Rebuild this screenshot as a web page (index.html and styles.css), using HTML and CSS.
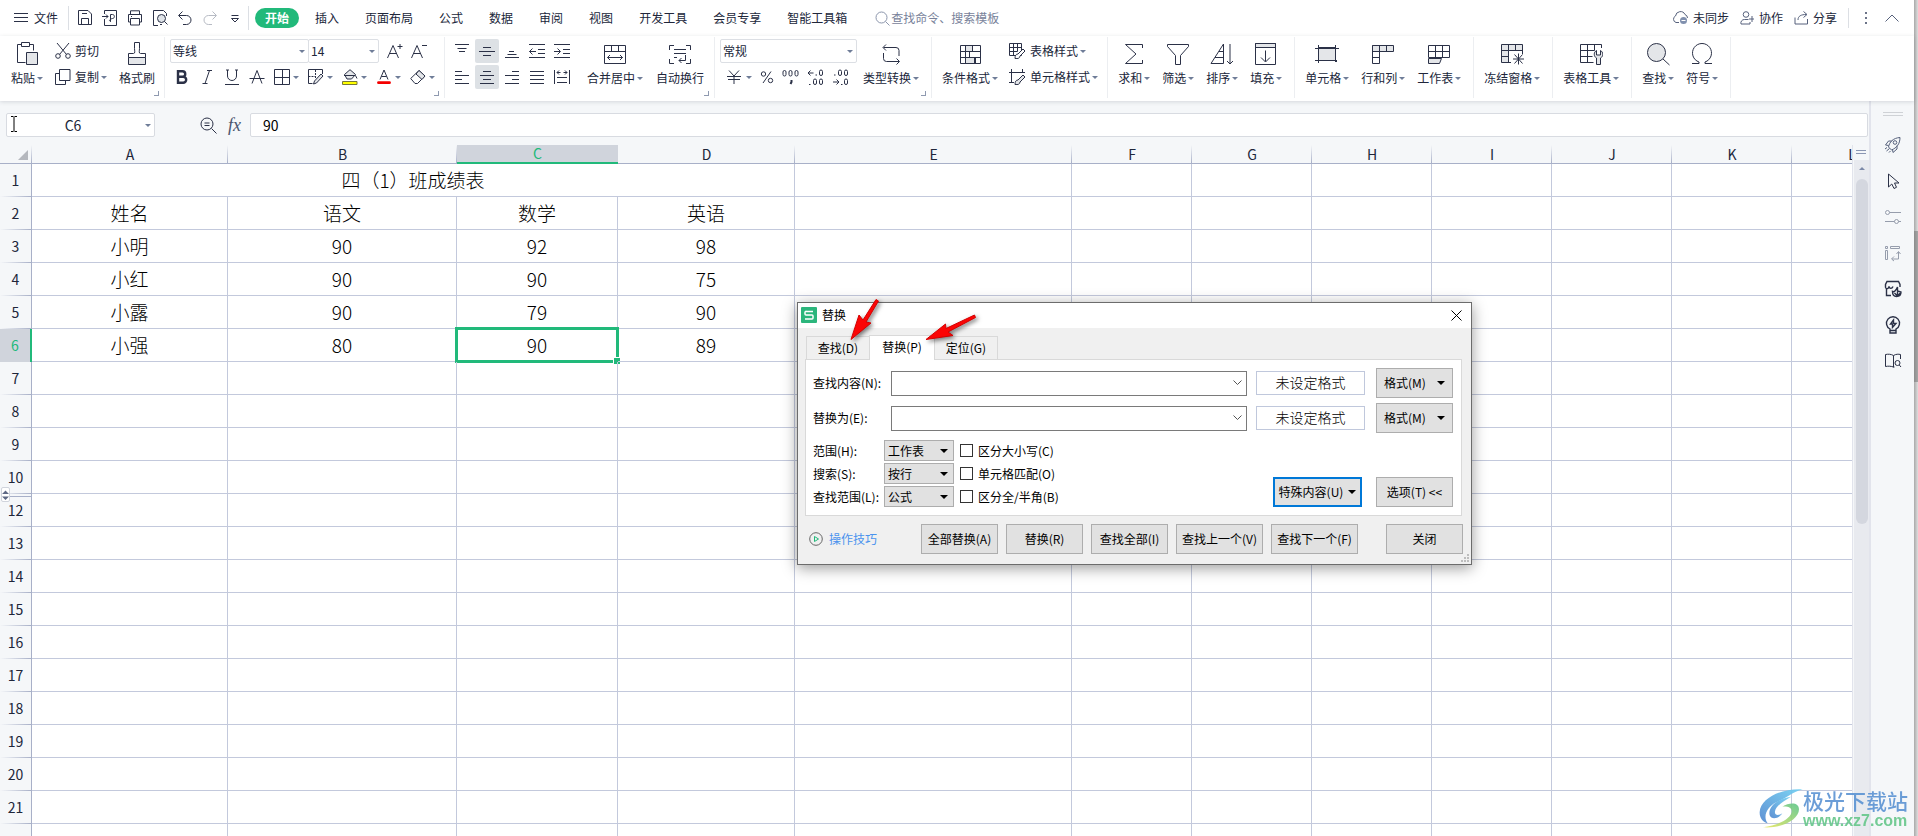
FILE: index.html
```html
<!DOCTYPE html>
<html lang="zh-CN">
<head>
<meta charset="utf-8">
<title>表格</title>
<link rel="stylesheet" href="styles.css">
</head>
<body>
<div class="app">
  <header class="menubar">
    <button class="file"><svg width="14" height="12" viewBox="0 0 14 12"><path d="M0 1.500h14M0 5.500h14M0 9.500h14"/></svg>文件</button>
    <span class="rule"></span>
    <div class="quick">
      <button aria-label="保存"><svg width="16" height="16" viewBox="0 0 16 16"><path d="M1.500.5h9.500l3.500 3.500v10.500h-13zM4.500 14.500v-6h7v6M5 3.500h5"/></svg></button>
      <button aria-label="输出为PDF"><svg width="16" height="16" viewBox="0 0 16 16"><path d="M2.500 4V.5h12v15h-12V9M0 6.500h6M4 4.500l2 2-2 2M8.500 11V4.500h2c2.500 0 2.500 4 0 4-3 .5-4 3-1.500 3"/></svg></button>
      <button aria-label="打印"><svg width="16" height="16" viewBox="0 0 16 16"><path d="M3.500 4V.8h9V4M3.500 12H1.500V4.500h13V12h-2M3.500 8.500h9v6.500h-9zM4 6.500h1"/></svg></button>
      <button aria-label="打印预览"><svg width="16" height="16" viewBox="0 0 16 16"><path d="M6 15.500H1.500V.5h10l3 3V6M10 14.500h-2"/><circle cx="9.500" cy="8.500" r="4" fill="#dfe3e8"/><path d="M12.500 11.500l3 3"/></svg></button>
      <button aria-label="撤销"><svg width="16" height="16" viewBox="0 0 16 16"><path d="M5.500 1.500l-4 4 4 4M2 5.500h7.500a4.500 4.500 0 0 1 0 9H6"/></svg></button>
      <button aria-label="恢复" class="off"><svg width="16" height="16" viewBox="0 0 16 16"><path d="M10.500 1.500l4 4-4 4M14 5.500H6.500a4.500 4.500 0 0 0 0 9H10"/></svg></button>
      <button aria-label="更多"><svg width="16" height="16" viewBox="0 0 16 16"><path d="M4.500 5.500h7M4.500 8.500h7L8 12z"/></svg></button>
    </div>
    <span class="rule"></span>
    <nav class="tabs">
      <button class="on">开始</button><button>插入</button><button>页面布局</button><button>公式</button><button>数据</button><button>审阅</button><button>视图</button><button>开发工具</button><button>会员专享</button><button>智能工具箱</button>
    </nav>
    <label class="search"><svg width="15" height="15" viewBox="0 0 15 15"><circle cx="6.500" cy="6.500" r="5.500"/><path d="M10.500 10.500l4 4"/></svg><input type="text" placeholder="查找命令、搜索模板" aria-label="查找命令"></label>
    <div class="account">
      <button><svg width="17" height="16" viewBox="0 0 17 16"><path d="M7 12.500H4A3.500 3.500 0 0 1 3.500 6a5 5 0 0 1 9.500-1.500 3.800 3.800 0 0 1 2.500 3.500"/><circle cx="11.500" cy="10.500" r="3.500" fill="#8090ae" stroke="none"/><path d="M9.500 10.500h4" stroke="#fff"/></svg>未同步</button>
      <button><svg width="15" height="14" viewBox="0 0 15 14"><circle cx="6" cy="3.500" r="2.800"/><path d="M8.500 8.500h-4a3.500 3.500 0 0 0-3.500 4.500h9v-2M12 5v6M9 8h5"/></svg>协作</button>
      <button><svg width="15" height="14" viewBox="0 0 15 14"><path d="M1 6.500v6.500h12.500V8M4 9c0-4 3-5.500 8.500-5.500M9.500.5l3.500 3-3.500 3"/></svg>分享</button>
      <span class="rule"></span>
      <button aria-label="选项"><svg width="4" height="14" viewBox="0 0 4 14"><path d="M1 1h2v2H1zM1 6h2v2H1zM1 11h2v2H1z" fill="#6b7388" stroke="none"/></svg></button>
      <button aria-label="收起功能区" class="fold"><svg width="14" height="10" viewBox="0 0 14 10"><path d="M.5 8.500L7 2l6.500 6.500"/></svg></button>
    </div>
  </header>

  <div class="ribbon">
    <section class="group clip">
      <button class="big"><svg width="24" height="24" viewBox="0 0 24 24"><path d="M6.500 2.500h-4v18h8M14.500 2.500h4v6M6.500.5h8v4h-8z"/><path d="M11.500 10.500h11v12h-11z" fill="#e4e6e9"/></svg><span>粘贴<i class="caret"></i></span></button>
      <div class="stack">
        <button class="small"><svg width="16" height="16" viewBox="0 0 16 16"><path d="M2 0l9.500 11.500M14 0L4.500 11.500"/><circle cx="3" cy="13" r="2.300"/><circle cx="13" cy="13" r="2.300"/></svg><span>剪切</span></button>
        <button class="small"><svg width="16" height="16" viewBox="0 0 16 16"><path d="M4.500 4.500h-4v11h10v-4M4.500.5h10.500v11H4.500z"/></svg><span>复制<i class="caret"></i></span></button>
      </div>
      <button class="big"><svg width="24" height="24" viewBox="0 0 24 24"><path d="M3.500 15.500h17v7h-17z" fill="#e4e6e9"/><path d="M3.500 15.500v-4h5c2 0 1-3 1-5v-6h5v6c0 2-1 5 1 5h5v4"/></svg><span>格式刷</span></button>
      <i class="launch"></i>
    </section>

    <section class="group font">
      <div class="stack">
        <div class="row">
          <span class="pick face"><select aria-label="字体"><option>等线</option></select><i class="caret"></i></span>
          <span class="pick size"><select aria-label="字号"><option>14</option></select><i class="caret"></i></span>
          <button class="tool" aria-label="增大字号"><svg width="16" height="16" viewBox="0 0 16 16"><path d="M.5 15L6 2.500 11.500 15M2.500 10.500h7M10.500 3.500h5M13 1v5"/></svg></button>
          <button class="tool" aria-label="减小字号"><svg width="16" height="16" viewBox="0 0 16 16"><path d="M.5 15L6 2.500 11.500 15M2.500 10.500h7M11 2.500h5"/></svg></button>
        </div>
        <div class="row marks">
          <button aria-label="加粗"><svg width="16" height="16" viewBox="0 0 16 16"><path d="M4 2.200h4.500a2.700 2.700 0 0 1 0 5.500H4zM4 7.700h5.200a3 3 0 0 1 0 6H4z" stroke-width="2.400"/></svg></button>
          <button aria-label="倾斜"><svg width="16" height="16" viewBox="0 0 16 16"><path d="M8 1.500h5M3.500 14.500h5M10.500 1.500l-4.500 13"/></svg></button>
          <button aria-label="下划线"><svg width="16" height="16" viewBox="0 0 16 16"><path d="M3.500 1v6a4.500 4.500 0 0 0 9 0V1M1 15.500h14M2 1h3M11 1h3"/></svg></button>
          <button aria-label="删除线"><svg width="16" height="16" viewBox="0 0 16 16"><path d="M3 14.500L8 1.500l5 13M.5 9.500h15"/></svg></button>
          <button aria-label="边框"><svg width="16" height="16" viewBox="0 0 16 16"><path d="M.5.5h15v15H.5zM.5 8.500h15M8.500.5v15"/></svg><i class="caret"></i></button>
          <button aria-label="绘图边框"><svg width="16" height="16" viewBox="0 0 16 16"><path d="M14.500 5V.5H.5v14h4"/><path d="M.5 7.500h7M7.500 1v8" stroke-dasharray="2 1"/><path d="M5.500 15l1-3L13 5l2 2-6.500 7z" fill="#e4e6e9"/></svg><i class="caret"></i></button>
          <button aria-label="填充颜色"><svg width="16" height="16" viewBox="0 0 16 16"><path d="M2.500 5.500L8 .7l5.500 4.800L9.500 10H5z" fill="#e4e6e9"/><path d="M2 6.500h11.500l1.500 3"/><path d="M.5 12.500h14.500v3H.5z" fill="#ff0" stroke="#77773a"/></svg><i class="caret"></i></button>
          <button aria-label="字体颜色"><svg width="16" height="16" viewBox="0 0 16 16"><path d="M4 10.500L8 1l4 9.500M5.500 7.500h5"/><path d="M2.500 13.700h11" stroke="#f40000" stroke-width="2.800" stroke-linecap="round"/></svg><i class="caret"></i></button>
          <button aria-label="清除"><svg width="16" height="16" viewBox="0 0 16 16"><path d="M.7 9.500L9 1.500l6 5.500-7.500 7.500H5z"/><path d="M6 5l6 5.500L15 7 9 1.500z" fill="#e4e6e9"/></svg><i class="caret"></i></button>
        </div>
      </div>
      <i class="launch"></i>
    </section>

    <section class="group align">
      <div class="grid">
        <button aria-label="顶端对齐"><svg width="16" height="16" viewBox="0 0 16 16"><path d="M1 1.500h14M3.500 5.500h9M5 8.500h6"/></svg></button>
        <button aria-label="垂直居中" class="on"><svg width="16" height="16" viewBox="0 0 16 16"><path d="M0 8.500h16M4 4.500h8M4 12.500h8"/></svg></button>
        <button aria-label="底端对齐"><svg width="16" height="16" viewBox="0 0 16 16"><path d="M1 14.500h14M3.500 11.500h9M5 8.500h5"/></svg></button>
        <button aria-label="减少缩进"><svg width="16" height="16" viewBox="0 0 16 16"><path d="M0 1.500h16M9 6.500h7M9 10.500h7M0 14.500h16M.5 8.500H7M3.500 5.500l-3 3 3 3"/></svg></button>
        <button aria-label="增加缩进"><svg width="16" height="16" viewBox="0 0 16 16"><path d="M0 1.500h16M9 6.500h7M9 10.500h7M0 14.500h16M0 8.500h6M3.500 5.500l3 3-3 3"/></svg></button>
        <button aria-label="左对齐"><svg width="16" height="16" viewBox="0 0 16 16"><path d="M1 2.500h7M1 6.500h14M1 10.500h7M1 14.500h14"/></svg></button>
        <button aria-label="水平居中" class="on"><svg width="16" height="16" viewBox="0 0 16 16"><path d="M4 2.500h8M1 6.500h14M4 10.500h8M1 14.500h14"/></svg></button>
        <button aria-label="右对齐"><svg width="16" height="16" viewBox="0 0 16 16"><path d="M8 2.500h7M1 6.500h14M8 10.500h7M1 14.500h14"/></svg></button>
        <button aria-label="两端对齐"><svg width="16" height="16" viewBox="0 0 16 16"><path d="M1 2.500h14M1 6.500h14M1 10.500h14M1 14.500h14"/></svg></button>
        <button aria-label="分散对齐"><svg width="16" height="16" viewBox="0 0 16 16"><path d="M.5 1v14M15.500 1v14M3 3.500h3.500M9.500 3.500H13M5 1.500l-2 2 2 2M11 1.500l2 2-2 2M3 8.500h10M3 13.500h10"/></svg></button>
      </div>
      <button class="big"><svg width="24" height="24" viewBox="0 0 24 24"><path d="M1.500 3.500h21v18h-21zM1.500 9.500h21M8.500 3.500v6M15.500 3.500v6M4.500 15.500h15M7 13l-2.500 2.500L7 18M17 13l2.500 2.500L17 18"/></svg><span>合并居中<i class="caret"></i></span></button>
      <button class="big"><svg width="24" height="24" viewBox="0 0 24 24"><path d="M6 3.500H1.500V8M18 3.500h4.500V8M1.500 17v4.500H6M22.500 17v4.500H18M6 7.500h12M6 11.500h12M6 15.500h3M17.500 13v5.500H11M13.500 16L11 18.500l2.500 2.500"/></svg><span>自动换行</span></button>
      <i class="launch"></i>
    </section>

    <section class="group number">
      <div class="stack">
        <span class="pick kind"><select aria-label="数字格式"><option>常规</option></select><i class="caret"></i></span>
        <div class="row digits">
          <button aria-label="货币"><svg width="14" height="16" viewBox="0 0 14 16"><path d="M2 1.500l5 5.500 5-5.500M0 7.500h14M1 10.500h12M7 7v8"/></svg><i class="caret"></i></button>
          <button aria-label="百分比"><svg width="14" height="16" viewBox="0 0 14 16"><circle cx="3.500" cy="5" r="2.200"/><circle cx="10.500" cy="11.500" r="2.200"/><path d="M11 2.500L3 14"/></svg></button>
          <button aria-label="千位分隔"><svg width="17" height="16" viewBox="0 0 17 16"><rect x="1" y="1.500" width="3" height="5.500" rx="1.500"/><rect x="7" y="1.500" width="3" height="5.500" rx="1.500"/><rect x="13" y="1.500" width="3" height="5.500" rx="1.500"/><path d="M9.500 11v2l-1 2" stroke-width="2"/></svg></button>
          <button aria-label="增加小数位"><svg width="17" height="17" viewBox="0 0 17 17"><path d="M1 4h5.500M3.500 1.500L1 4l2.500 2.500M8.500 6h1.500M2 15.500h1.500"/><rect x="12.500" y="1" width="3" height="5.500" rx="1.500"/><rect x="6.500" y="10" width="3" height="5.500" rx="1.500"/><rect x="12.500" y="10" width="3" height="5.500" rx="1.500"/></svg></button>
          <button aria-label="减少小数位"><svg width="17" height="17" viewBox="0 0 17 17"><path d="M1 13h6M4.500 10.500L7 13l-2.500 2.500M2 6h1.500M9 15.500h1.500"/><rect x="6.500" y="1" width="3" height="5.500" rx="1.500"/><rect x="12.500" y="1" width="3" height="5.500" rx="1.500"/><rect x="12.500" y="10" width="3" height="5.500" rx="1.500"/></svg></button>
        </div>
      </div>
      <button class="big"><svg width="24" height="24" viewBox="0 0 24 24"><path d="M7 2.500l-3 3 3 3M4.500 5.500H17a3 3 0 0 1 3 3V14M4.500 11v5.500a3 3 0 0 0 3 3H20M17.500 16.500l3 3-3 3"/></svg><span>类型转换<i class="caret"></i></span></button>
      <i class="launch"></i>
    </section>

    <section class="group style">
      <button class="big"><svg width="24" height="24" viewBox="0 0 24 24"><path d="M7.500 3.500h7v6h-7zM7.500 15.500h9v6h-9z" fill="#e4e6e9"/><path d="M2.500 3.500h20v18h-20zM2.500 9.500h20M2.500 15.500h20M7.500 3.500v18M14.500 3.500v6M11.500 9.500v6M17.500 15.500v6"/></svg><span>条件格式<i class="caret"></i></span></button>
      <div class="stack">
        <button class="small"><svg width="17" height="16" viewBox="0 0 17 16"><path d="M.5.5h12v12H.5zM.5 4.500h12M.5 8.500h8M4.500.5v12M8.500.5v8"/><path d="M6 15.500c0-3 1-4.500 3-4.500l5-5 2 2-5 5c0 2-2 3-5 2.500z" fill="#fff"/></svg><span>表格样式<i class="caret"></i></span></button>
        <button class="small"><svg width="17" height="16" viewBox="0 0 17 16"><path d="M0 3.500h16M2.500 0v13.500M0 13.500h5M13.500 0v4"/><path d="M6 15.500c0-3 1-4.500 3-4.500l5-5 2 2-5 5c0 2-2 3-5 2.500z" fill="#e4e6e9"/></svg><span>单元格样式<i class="caret"></i></span></button>
      </div>
    </section>

    <section class="group">
      <button class="big"><svg width="24" height="24" viewBox="0 0 24 24"><path d="M20.500 6V2.500h-17L14 12 3.500 21.500h17V18"/></svg><span>求和<i class="caret"></i></span></button>
      <button class="big"><svg width="24" height="24" viewBox="0 0 24 24"><path d="M1.500 2.500h21v2l-8 9v9h-5v-9l-8-9z"/></svg><span>筛选<i class="caret"></i></span></button>
      <button class="big"><svg width="24" height="24" viewBox="0 0 24 24"><path d="M1 21.500L13.500 2v19.500zM9 9.500h4.500M5 15.500h8.500M20 2v19.500M17 19l3 3 3-3"/></svg><span>排序<i class="caret"></i></span></button>
      <button class="big"><svg width="24" height="24" viewBox="0 0 24 24"><path d="M1.500 1.500h20v4h-20z" fill="#e4e6e9"/><path d="M1.500 1.500h20v21h-20zM11.500 8.500v11M7 15.500l4.500 4.500 4.500-4.500"/></svg><span>填充<i class="caret"></i></span></button>
    </section>

    <section class="group">
      <button class="big"><svg width="24" height="24" viewBox="0 0 24 24"><path d="M3.500 5.500h17v13h-17z" fill="#e4e6e9"/><path d="M0 6.500h24M3.500 3v18M20.500 3v14M0 18.500h18M20 18.500h2M20 19.500h2"/></svg><span>单元格<i class="caret"></i></span></button>
      <button class="big"><svg width="24" height="24" viewBox="0 0 24 24"><path d="M1.500 3.500h21v6h-21z" fill="#e4e6e9"/><path d="M8.500 3.500v18h-7v-18M15.500 3.500v6M1.500 15.500h7"/></svg><span>行和列<i class="caret"></i></span></button>
      <button class="big"><svg width="24" height="24" viewBox="0 0 24 24"><path d="M1.500 16.500h13l-2 5h-11z" fill="#e4e6e9"/><path d="M1.500 3.500h21v12h-21zM1.500 9.500h21M8.500 3.500v12M15.500 3.500v12"/></svg><span>工作表<i class="caret"></i></span></button>
    </section>

    <section class="group">
      <button class="big"><svg width="24" height="24" viewBox="0 0 24 24"><path d="M1.500 2.500h21v6h-14v12h-7z" fill="#e4e6e9"/><path d="M1.500 8.500h7v-6M15.500 2.500v6M1.500 14.500h7M22.500 8v4M8 20.500h3M18.500 11.500v11M13 17h11M14.500 12.500l8 9M22.500 12.500l-8 9"/></svg><span>冻结窗格<i class="caret"></i></span></button>
    </section>

    <section class="group">
      <button class="big"><svg width="24" height="24" viewBox="0 0 24 24"><path d="M22.500 6V2.500h-21v18h13M1.500 8.500h14M1.500 14.500h12M8.500 2.500v18M15.500 2.500v6"/><path d="M17.500 8.500c-3 1.500-3 6 0 7.500v6.500h4V16c3-1.500 3-6 0-7.500V13h-4z" fill="#e4e6e9"/></svg><span>表格工具<i class="caret"></i></span></button>
    </section>

    <section class="group">
      <button class="big"><svg width="24" height="24" viewBox="0 0 24 24"><circle cx="10.500" cy="10.500" r="9" fill="#e4e6e9"/><path d="M17 17l6.500 6"/></svg><span>查找<i class="caret"></i></span></button>
      <button class="big"><svg width="24" height="24" viewBox="0 0 24 24"><path d="M2 21.500h7v-1.500a9.500 9.500 0 1 1 6 0v1.500h7"/></svg><span>符号<i class="caret"></i></span></button>
    </section>
  </div>

  <div class="workspace">
    <main class="editor">
      <div class="formula">
        <span class="name"><input type="text" value="C6" aria-label="名称框"><i class="caret"></i>
          <svg class="ibeam" width="8" height="16" viewBox="0 0 8 16"><path d="M1 .5h2.500M4.500.5H7M4 1v14M1 15.500h2.500M4.500 15.500H7"/></svg></span>
        <button aria-label="缩小"><svg width="17" height="17" viewBox="0 0 17 17"><circle cx="7" cy="7" r="6"/><path d="M4.500 6h5M4.500 8.500h5M11.500 11.500l5 5"/></svg></button>
        <button class="fx" aria-label="插入函数">fx</button>
        <input class="value" type="text" value="90" aria-label="编辑栏">
      </div>
      <div class="sheet">
        <div class="cells">
          <table>
            <colgroup><col class="c-no"><col class="c-a"><col class="c-b"><col class="c-c"><col class="c-d"><col class="c-e"><col><col><col><col><col><col><col></colgroup>
            <thead><tr><th class="corner"></th><th>A</th><th>B</th><th class="on">C</th><th>D</th><th>E</th><th>F</th><th>G</th><th>H</th><th>I</th><th>J</th><th>K</th><th>L</th></tr></thead>
            <tbody>
              <tr><th>1</th><td colspan="4">四（1）班成绩表</td><td></td><td></td><td></td><td></td><td></td><td></td><td></td><td></td></tr>
              <tr><th>2</th><td>姓名</td><td>语文</td><td>数学</td><td>英语</td><td></td><td></td><td></td><td></td><td></td><td></td><td></td><td></td></tr>
              <tr><th>3</th><td>小明</td><td>90</td><td>92</td><td>98</td><td></td><td></td><td></td><td></td><td></td><td></td><td></td><td></td></tr>
              <tr><th>4</th><td>小红</td><td>90</td><td>90</td><td>75</td><td></td><td></td><td></td><td></td><td></td><td></td><td></td><td></td></tr>
              <tr><th>5</th><td>小露</td><td>90</td><td>79</td><td>90</td><td></td><td></td><td></td><td></td><td></td><td></td><td></td><td></td></tr>
              <tr><th class="on">6</th><td>小强</td><td>80</td><td class="active">90</td><td>89</td><td></td><td></td><td></td><td></td><td></td><td></td><td></td><td></td></tr>
              <tr><th>7</th><td></td><td></td><td></td><td></td><td></td><td></td><td></td><td></td><td></td><td></td><td></td><td></td></tr>
              <tr><th>8</th><td></td><td></td><td></td><td></td><td></td><td></td><td></td><td></td><td></td><td></td><td></td><td></td></tr>
              <tr><th>9</th><td></td><td></td><td></td><td></td><td></td><td></td><td></td><td></td><td></td><td></td><td></td><td></td></tr>
              <tr><th>10</th><td></td><td></td><td></td><td></td><td></td><td></td><td></td><td></td><td></td><td></td><td></td><td></td></tr>
              <tr><th class="after-hidden">12<button class="expand" aria-label="展开隐藏行"><svg width="7" height="12" viewBox="0 0 7 12"><path d="M0 5l3.500-3.500L7 5zM0 7.500h7L3.500 11z"/></svg></button></th><td></td><td></td><td></td><td></td><td></td><td></td><td></td><td></td><td></td><td></td><td></td><td></td></tr>
              <tr><th>13</th><td></td><td></td><td></td><td></td><td></td><td></td><td></td><td></td><td></td><td></td><td></td><td></td></tr>
              <tr><th>14</th><td></td><td></td><td></td><td></td><td></td><td></td><td></td><td></td><td></td><td></td><td></td><td></td></tr>
              <tr><th>15</th><td></td><td></td><td></td><td></td><td></td><td></td><td></td><td></td><td></td><td></td><td></td><td></td></tr>
              <tr><th>16</th><td></td><td></td><td></td><td></td><td></td><td></td><td></td><td></td><td></td><td></td><td></td><td></td></tr>
              <tr><th>17</th><td></td><td></td><td></td><td></td><td></td><td></td><td></td><td></td><td></td><td></td><td></td><td></td></tr>
              <tr><th>18</th><td></td><td></td><td></td><td></td><td></td><td></td><td></td><td></td><td></td><td></td><td></td><td></td></tr>
              <tr><th>19</th><td></td><td></td><td></td><td></td><td></td><td></td><td></td><td></td><td></td><td></td><td></td><td></td></tr>
              <tr><th>20</th><td></td><td></td><td></td><td></td><td></td><td></td><td></td><td></td><td></td><td></td><td></td><td></td></tr>
              <tr><th>21</th><td></td><td></td><td></td><td></td><td></td><td></td><td></td><td></td><td></td><td></td><td></td><td></td></tr>
              <tr><th></th><td></td><td></td><td></td><td></td><td></td><td></td><td></td><td></td><td></td><td></td><td></td><td></td></tr>
            </tbody>
          </table>
        </div>
        <div class="scroller"><div class="split"></div><div class="track"><i class="up"></i><i class="thumb"></i></div></div>
      </div>
    </main>
    <aside class="side">
      <i class="grip"></i>
      <button aria-label="推荐功能" class="soft"><svg width="18" height="18" viewBox="0 0 18 18"><path d="M4.500 11c1-5 4.500-9 11.500-9.500C16 8 12.500 12 7.500 14zM4.500 9.500L1.500 9l3-4h3.500M8.500 13.500l.5 3 4-3.500V9.500M1 13l2-1.500M2.500 15l3-2.500M5 16.500l1.500-1.500"/><circle cx="11" cy="6.500" r="1.800"/></svg></button>
      <button aria-label="选择"><svg width="18" height="18" viewBox="0 0 18 18"><path d="M4.500 2v13l3.300-3L10 16.500l2.500-1.200-2-4.300h4.500z"/></svg></button>
      <button aria-label="属性" class="dim"><svg width="18" height="18" viewBox="0 0 18 18"><circle cx="3.500" cy="4.500" r="2"/><circle cx="12.500" cy="13.500" r="2"/><path d="M5.500 4.500H17M1 13.500h9.500M14.500 13.500H17"/></svg></button>
      <button aria-label="分析" class="dim"><svg width="18" height="18" viewBox="0 0 18 18"><path d="M1.500 2.500h2v2h-2zM6.500 2.500h9v2h-9zM1.500 6.500h2v9h-2zM14.500 8v7H8M12.500 10l2-2.500 2 2.500M10 12.500L7.500 15l2.500 2"/></svg></button>
      <button aria-label="资源库"><svg width="18" height="18" viewBox="0 0 18 18" class="heavy"><path d="M2.500 8v7.500H7M1.500 7.500V4.500l1.500-3h11.500l1.500 3V7M1.500 7.500c1 2 3 1.500 3.500-1 .5 2.500 3 2.500 4 0"/><path d="M8.500 11.500c2 1 3.500-1.500 5-4.500v4l3.500 1c0 3-2 4.500-4.500 4.500s-4-2-4-5zM10.500 13l2.500 2.500M13.500 11v4.500l3-2.500"/></svg></button>
      <button aria-label="灵感"><svg width="18" height="18" viewBox="0 0 18 18" class="heavy"><path d="M6 14v-1a6.500 6.500 0 1 1 6 0v4H6v-3M6 14.500h6M9.500 4L6.500 8h2v3.500L12 7.500H9.500z"/></svg></button>
      <button aria-label="帮助"><svg width="18" height="18" viewBox="0 0 18 18"><path d="M9.500 3.500v11.500M9.500 3.500C7 2 4 2 1.500 2.500v12c2.500-.5 5-.5 8 .5M9.500 3.500c2.500-1.500 5-1.500 7-1V7M9 15h1.500"/><circle cx="13.500" cy="11" r="2.500"/><path d="M15.300 13l1.700 2"/></svg></button>
    </aside>
  </div>
</div>
<div class="edge"><i></i></div>

<form class="dialog" role="dialog" aria-label="替换">
  <div class="title">
    <svg width="16" height="16" viewBox="0 0 16 16"><rect width="16" height="16" rx="1" fill="#2cb67c" stroke="none"/><path d="M12 4.500H5.500a1 1 0 0 0-1.500 1v1.500a1 1 0 0 0 1 1h6a1 1 0 0 1 1 1v2a1 1 0 0 1-1 1H4" stroke="#fff" stroke-width="1.500"/></svg>
    <span>替换</span>
    <button type="button" aria-label="关闭"><svg width="11" height="11" viewBox="0 0 11 11"><path d="M.5.5l10 10M10.500.5l-10 10"/></svg></button>
  </div>
  <div class="pages"><button type="button">查找(D)</button><button type="button" class="on">替换(P)</button><button type="button">定位(G)</button></div>
  <div class="panel">
    <div class="line">
      <label for="find">查找内容(N):</label>
      <span class="combo"><input id="find" type="text"><svg width="9" height="6" viewBox="0 0 9 6"><path d="M.5.5l4 4 4-4"/></svg></span>
      <output>未设定格式</output>
      <button type="button" class="push menu">格式(M)<i class="drop"></i></button>
    </div>
    <div class="line">
      <label for="repl">替换为(E):</label>
      <span class="combo"><input id="repl" type="text"><svg width="9" height="6" viewBox="0 0 9 6"><path d="M.5.5l4 4 4-4"/></svg></span>
      <output>未设定格式</output>
      <button type="button" class="push menu">格式(M)<i class="drop"></i></button>
    </div>
    <div class="options">
      <div class="choices">
        <div class="choice"><label class="lead" for="s1">范围(H):</label><span class="sel"><select id="s1"><option>工作表</option></select><i class="drop"></i></span><label class="tick"><input type="checkbox">区分大小写(C)</label></div>
        <div class="choice"><label class="lead" for="s2">搜索(S):</label><span class="sel"><select id="s2"><option>按行</option></select><i class="drop"></i></span><label class="tick"><input type="checkbox">单元格匹配(O)</label></div>
        <div class="choice"><label class="lead" for="s3">查找范围(L):</label><span class="sel"><select id="s3"><option>公式</option></select><i class="drop"></i></span><label class="tick"><input type="checkbox">区分全/半角(B)</label></div>
      </div>
      <button type="button" class="push special">特殊内容(U)<i class="drop"></i></button>
      <button type="button" class="push">选项(T) &lt;&lt;</button>
    </div>
  </div>
  <div class="actions">
    <a href="#tips"><svg width="14" height="14" viewBox="0 0 14 14"><circle cx="7" cy="7" r="6.300" stroke="#666"/><path d="M5.500 4.500v5L9.500 7z" stroke="#21b97a"/></svg>操作技巧</a>
    <button type="button" class="push">全部替换(A)</button>
    <button type="button" class="push">替换(R)</button>
    <button type="button" class="push">查找全部(I)</button>
    <button type="button" class="push wide">查找上一个(V)</button>
    <button type="button" class="push wide">查找下一个(F)</button>
    <button type="button" class="push close">关闭</button>
  </div>
  <svg class="size-grip" width="9" height="9" viewBox="0 0 9 9"><path d="M7 0h2v2H7zM4 3h2v2H4zM7 3h2v2H7zM1 6h2v2H1zM4 6h2v2H4zM7 6h2v2H7z"/></svg>
  <svg class="pointers" width="140" height="50" viewBox="0 0 140 50"><path d="M11 43.500L19 19l4 5L36 3.500 38.500 5 26 26l5 1zM86 43.500L105.500 28l.5 4.500L134.500 19l1 2.500L108 36l5 3.500z"/></svg>
</form>

<div class="mark">
  <svg width="44" height="42" viewBox="0 0 132 126">
    <defs><linearGradient id="sky" x1="0" y1="1" x2="1" y2="0"><stop offset="0" stop-color="#4f86cf"/><stop offset="1" stop-color="#6fd0f3"/></linearGradient><linearGradient id="leaf" x1="0" y1="1" x2="1" y2="0"><stop offset="0" stop-color="#e9e860"/><stop offset="1" stop-color="#5cc58a"/></linearGradient></defs>
    <path d="M131 4C70 0 4 30 2 72c-1 18 10 30 24 34C10 84 24 52 62 38 82 30 98 14 131 4z" fill="url(#sky)"/>
    <path d="M96 26C50 34 26 60 32 82c5 14 28 10 38-6-12 8-24 6-22-6 3-16 22-28 48-44z" fill="url(#sky)"/>
    <path d="M70 56c22-14 50-14 50 8 0 30-48 58-108 54 50-6 88-30 86-50-1-10-14-14-28-12z" fill="url(#leaf)"/>
  </svg>
  <div><b>极光下载站</b><span>www.xz7.com</span></div>
</div>
</body>
</html>
```
FILE: styles.css
```css
* { box-sizing: border-box; }
body {
  margin: 0;
  height: 100vh;
  display: flex;
  overflow: hidden;
  position: relative;
  font: 12px/18px "Noto Sans CJK SC", "Noto Sans", sans-serif;
  color: #20263a;
  background: #fff;
}
button, input, select, output { font: inherit; color: inherit; }
button {
  border: 0;
  padding: 0;
  margin: 0;
  background: none;
  display: flex;
  align-items: center;
  justify-content: center;
  white-space: nowrap;
}
select { appearance: none; border: 0; background: none; width: 100%; outline: 0; }
input { border: 0; outline: 0; min-width: 0; }
svg { fill: none; stroke: #2b3147; stroke-width: 1; flex: none; display: block; }
i { flex: none; }
.app { flex: 1; min-width: 0; display: flex; flex-direction: column; }
.caret {
  width: 0;
  height: 0;
  border: 3px solid transparent;
  border-top-color: #6f7d98;
  border-bottom: 0;
}
.rule { width: 1px; background: #dcdfe4; }

/* menu bar */
.menubar { height: 36px; display: flex; align-items: center; padding-left: 14px; }
.menubar .rule { height: 24px; }
.file { gap: 6px; margin-right: 10px; }
.quick { display: flex; gap: 9px; padding: 0 5px 0 8px; }
.quick .off svg { stroke: #b7bbc4; }
.tabs { display: flex; gap: 6px; padding-left: 6px; }
.tabs button { height: 20px; padding: 0 10px; border-radius: 10px; }
.tabs .on { background: #21b97a; color: #fff; font-weight: 700; }
.search { display: flex; align-items: center; gap: 1px; margin-left: 18px; }
.search svg { stroke: #8c96ac; }
.search input { width: 120px; padding: 0; }
.search input::placeholder { color: #78829a; opacity: 1; }
.account { display: flex; align-items: center; gap: 11px; margin-left: auto; padding-right: 15px; }
.account button { gap: 4px; }
.account svg { stroke: #56617c; }
.account .rule { height: 20px; margin-right: 4px; }
.account .fold { margin-left: 6px; }

/* ribbon */
.ribbon {
  height: 65px;
  display: flex;
  padding: 1px 0 3px;
  position: relative;
  background: #fff;
  box-shadow: 0 1px 4px rgba(60, 70, 90, .18);
  z-index: 1;
}
.group {
  display: flex;
  align-items: flex-start;
  gap: 12px;
  padding: 2px 12px 0 10px;
  border-right: 1px solid #eceef1;
  position: relative;
}
.big { flex-direction: column; gap: 3px; padding-top: 3px; }
.big span, .small span { display: flex; align-items: center; gap: 2px; }
.small { height: 24px; gap: 4px; }
.stack { display: flex; flex-direction: column; align-items: flex-start; gap: 2px; }
.row { display: flex; align-items: center; height: 24px; }
.launch {
  position: absolute;
  right: 5px;
  bottom: 2px;
  width: 5px;
  height: 5px;
  border: solid #8f9ab0;
  border-width: 0 1px 1px 0;
}
.clip { padding: 2px 9px 0 11px; }
.font { padding: 2px 9px 0 5px; }
.align { padding: 2px 10px 0 5px; gap: 13px; }
.number { padding: 2px 12px 0 5px; gap: 6px; }
.style { gap: 11px; padding-right: 9px; }
.pick {
  height: 24px;
  display: flex;
  align-items: center;
  border: 1px solid #dcdfe4;
  border-radius: 2px;
  padding: 0 3px 0 2px;
}
.pick select { padding: 0; }
.face { width: 139px; }
.size { width: 71px; margin-left: -1px; margin-right: 8px; }
.kind { width: 137px; }
.tool + .tool { margin-left: 8px; }
.marks { padding-left: 4px; gap: 9px; }
.marks button { gap: 3px; }
.digits { padding-left: 7px; gap: 8px; }
.digits button { gap: 5px; }
.grid { display: grid; grid-template-columns: repeat(5, 24px); gap: 2px 1px; }
.grid button { height: 24px; border-radius: 2px; }
.grid .on { background: #dde1e5; }

/* formula bar and sheet */
.workspace { flex: 1; min-height: 0; display: flex; background: #f5f7f9; }
.editor { flex: 1; min-width: 0; display: flex; flex-direction: column; }
.formula { display: flex; align-items: center; padding: 12px 1px 8px 6px; }
.name {
  width: 149px;
  height: 24px;
  display: flex;
  align-items: center;
  position: relative;
  margin-right: 45px;
  padding-right: 3px;
  border: 1px solid #d8dbe1;
  border-radius: 2px;
  background: #fff;
}
.name input { flex: 1; padding: 0 6px 0 0; text-align: center; font-size: 14px; }
.ibeam { position: absolute; left: 3px; top: 2px; stroke: #000; }
.fx { margin: 0 9px 0 11px; font: italic 18px/20px "Liberation Serif", serif; color: #4c556e; }
.value {
  flex: 1;
  height: 24px;
  padding: 0 12px;
  border: 1px solid #d8dbe1;
  border-radius: 2px;
  background: #fff;
  font-size: 14px;
  color: #000;
}
.sheet { flex: 1; min-height: 0; display: flex; }
.cells { flex: 1; min-width: 0; overflow: hidden; background: #fff; }
table { width: 1912px; min-width: 100%; table-layout: fixed; border-collapse: separate; border-spacing: 0; }
.c-no { width: 32px; }
.c-a { width: 196px; }
.c-b { width: 229px; }
.c-c { width: 161px; }
.c-d { width: 177px; }
.c-e { width: 277px; }
th, td { padding: 0; text-align: center; white-space: nowrap; }
td {
  height: 33px;
  border: solid #c3c9dc;
  border-width: 0 1px 1px 0;
  font-size: 19px;
  line-height: 28px;
  font-weight: 300;
  color: #000;
  position: relative;
}
th { font-weight: 400; font-size: 14px; line-height: 17px; color: #20263a; background: #f5f7f9; position: relative; }
thead th {
  height: 19px;
  border-bottom: 1px solid #a8b0c8;
  background: linear-gradient(#f5f7f9, #a8b0c8) right / 1px 100% no-repeat #f5f7f9;
}
thead .on { background: #d0d4dc; color: #21b97a; border-bottom: 2px solid #21b97a; }
tbody th {
  border-right: 1px solid #a8b0c8;
  background: linear-gradient(90deg, #f5f7f9, #a8b0c8) bottom / 100% 1px no-repeat #f5f7f9;
}
tbody .on { background: #d0d4dc; color: #21b97a; border-right: 2px solid #21b97a; }
.corner::after {
  content: "";
  position: absolute;
  right: 4px;
  bottom: 3px;
  border: 5px solid;
  border-color: transparent #b5b8be #b5b8be transparent;
}
.active::before {
  content: "";
  position: absolute;
  inset: -2px;
  border: 3px solid #21b97a;
}
.active::after {
  content: "";
  position: absolute;
  right: -3px;
  bottom: -3px;
  width: 6px;
  height: 6px;
  background: #21b97a;
  border: solid #fff;
  border-width: 1px 0 0 1px;
}
.after-hidden::before { content: ""; position: absolute; left: 10px; right: 0; top: 2px; height: 1px; background: #a8b0c8; }
.expand {
  position: absolute;
  left: 1px;
  top: -7px;
  width: 9px;
  height: 15px;
  border: 1px solid #d0d4dc;
  border-radius: 2px;
  background: #fff;
}
.expand svg { fill: #5d6884; stroke: none; }
.scroller { width: 17px; padding: 0 2px 0 3px; display: flex; flex-direction: column; border-left: 1px solid #e2e4ec; }
.split { height: 15px; flex: none; background: linear-gradient(#8b97b3, #8b97b3) 0 5px / 10px 1px no-repeat, linear-gradient(#8b97b3, #8b97b3) 0 8px / 10px 1px no-repeat; }
.track { flex: 1; margin: 0 -2px; background: #e8eaef; display: flex; flex-direction: column; align-items: center; gap: 9px; padding-top: 7px; }
.up { border: 3px solid transparent; border-bottom-color: #7c89a8; border-top: 0; }
.thumb { width: 12px; height: 345px; border-radius: 6px; background: #d4d7df; }
.side {
  width: 45px;
  border-left: 2px solid #e2e4ec;
  display: flex;
  flex-direction: column;
  align-items: center;
  gap: 18px;
  padding-top: 11px;
}
.side .soft svg { stroke: #56617c; }
.side .dim svg { stroke: #969dac; }
.side .heavy { stroke-width: 1.4; }
.grip { width: 20px; height: 4px; margin-bottom: 2px; border: solid #cfd2d6; border-width: 1px 0; }
.edge { width: 4px; background: linear-gradient(90deg, #a9a9a9, #dedede); }
.edge i { display: block; margin-top: 231px; height: 151px; background: linear-gradient(90deg, #8c8c8c, #a6a6a6); }

/* replace dialog */
.dialog {
  position: absolute;
  left: 797px;
  top: 302px;
  width: 675px;
  z-index: 2;
  border: 1px solid #6c6c6c;
  background: #f0f0f0;
  color: #000;
  box-shadow: 0 3px 14px rgba(0, 0, 0, .4);
  padding-bottom: 10px;
}
.title { display: flex; align-items: center; gap: 5px; height: 25px; padding: 0 9px 1px 3px; background: #fff; }
.title button { margin-left: auto; }
.title button svg { stroke: #000; }
.pages { display: flex; align-items: flex-end; padding: 7px 0 0 8px; }
.pages button { width: 64px; height: 23px; border: 1px solid #d9d9d9; border-bottom: 0; }
.pages .on { height: 25px; margin: 0 -1px -1px; width: 66px; background: #fff; position: relative; padding-bottom: 2px; }
.panel { margin: 0 9px 8px 7px; padding: 8px 8px 8px 7px; border: 1px solid #d9d9d9; background: #fff; display: flex; flex-direction: column; gap: 5px; }
.line { display: flex; align-items: center; }
.line label { width: 78px; padding-bottom: 1px; }
.combo { flex: 1; height: 25px; display: flex; align-items: center; padding-right: 4px; border: 1px solid #7a7a7a; }
.combo input { flex: 1; height: 20px; }
.combo svg { stroke: #555; }
.line output { width: 109px; height: 24px; margin: 0 11px 0 9px; border: 1px solid #c0c8dc; font-size: 14px; line-height: 20px; font-weight: 300; text-align: center; }
.push { min-width: 77px; height: 30px; gap: 5px; padding-bottom: 1px; border: 1px solid #adadad; background: #e1e1e1; }
.menu { gap: 11px; }
.drop { border: 4px solid transparent; border-top-color: #000; border-bottom: 0; }
.options { display: flex; align-items: flex-end; gap: 14px; padding-top: 2px; }
.choices { display: flex; flex-direction: column; gap: 2px; margin-right: auto; }
.choice { display: flex; align-items: center; }
.lead { width: 71px; }
.sel { width: 70px; height: 21px; display: flex; align-items: center; border: 1px solid #adadad; background: #e1e1e1; padding: 0 5px 0 3px; margin-right: 6px; }
.sel select { padding: 0; }
.tick { display: flex; align-items: center; gap: 5px; }
.tick input { appearance: none; width: 13px; height: 13px; margin: 0; border: 1px solid #333; background: #fff; }
.special { border: 2px solid #0078d7; width: 89px; }
.actions { display: flex; gap: 8px; padding: 0 8px 0 11px; }
.actions a { display: flex; align-items: center; gap: 6px; margin-right: auto; color: #4a93ee; text-decoration: none; }
.actions .wide { width: 87px; }
.actions .close { margin-left: 20px; }
.size-grip { position: absolute; right: 2px; bottom: 1px; fill: #bdbdbd; stroke: none; }
.pointers { position: absolute; left: 42px; top: -7px; fill: #fb0505; stroke: #d40000; stroke-width: 1; filter: drop-shadow(2px 2px 2px rgba(0, 0, 0, .5)); pointer-events: none; }

/* watermark */
.mark { position: absolute; right: 10px; bottom: 6px; z-index: 3; display: flex; gap: 0; opacity: .9; pointer-events: none; }
.mark svg { stroke: none; }
.mark div { display: flex; flex-direction: column; }
.mark b { font-size: 21px; line-height: 24px; font-weight: 500; color: #5b93d3; }
.mark span { font: 16px/18px "Liberation Sans", sans-serif; font-weight: 700; color: #67c78b; }
```
